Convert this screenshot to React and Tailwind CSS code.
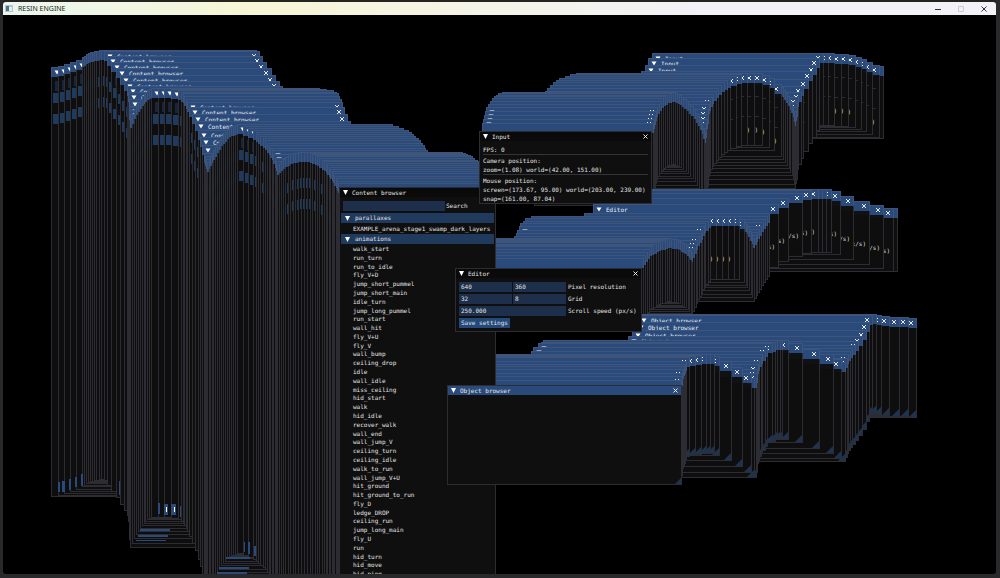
import React from "react";

const MONO = "font-['DejaVu_Sans_Mono','Liberation_Mono',monospace]";

// Paths that each window was dragged along: [x, y, steps from the previous point].
const CONTENT_PATH = [
  [51, 67, 1], [58, 66, 1], [64, 64, 1], [70, 62, 1], [76, 60, 1], [82, 57, 1], [88, 53, 3], [94, 51, 3], [101, 50, 3],
  [104, 51, 1], [107, 56, 1], [111, 62, 1], [116, 68, 1], [120, 75, 1], [124, 81, 1], [127, 86, 1], [128, 92, 1], [129, 99, 1], [129, 106, 1], [130, 118, 3],
  [136, 105, 3], [142, 96, 3], [147, 90, 3], [151, 88, 2], [158, 88, 1], [164, 88, 1], [171, 89, 1], [178, 90, 1], [183, 93, 2],
  [187, 102, 3], [189, 107, 1], [192, 114, 1], [195, 121, 1], [198, 130, 1], [200, 137, 1], [202, 145, 1], [204, 153, 1], [207, 162, 3],
  [213, 150, 4], [221, 136, 4], [229, 127, 4], [237, 124, 4], [243, 126, 1], [248, 128, 1], [253, 130, 1], [258, 134, 2],
  [265, 140, 3], [272, 150, 4], [277, 165, 4], [283, 159, 3], [290, 154, 3], [298, 152, 3], [307, 152, 3], [317, 156, 4], [326, 163, 4], [333, 173, 5], [338, 183, 4],
];
const INPUT_PATH = [
  [884, 66, 1], [880, 65, 1], [873, 62, 1], [867, 59, 1], [862, 57, 1], [856, 55, 1], [849, 54, 1], [842, 54, 1], [835, 53, 1], [829, 53, 1], [824, 53, 1],
  [820, 58, 1], [817, 65, 1], [813, 71, 1], [809, 79, 1], [804, 86, 1], [799, 97, 2], [796, 116, 4],
  [793, 103, 3], [788, 93, 3], [782, 84, 3], [775, 78, 1], [770, 75, 1], [763, 73, 1], [755, 73, 1], [748, 73, 1], [742, 74, 1], [737, 76, 1], [731, 78, 1],
  [725, 82, 2], [719, 88, 2], [714, 94, 2], [710, 104, 3], [706, 133, 6],
  [702, 120, 3], [696, 109, 3], [689, 101, 3], [682, 95, 3], [676, 92, 3], [670, 93, 3], [664, 98, 3], [658, 107, 3], [654, 123, 4],
];
const EDITOR_PATH = [
  [898, 208, 1], [894, 208, 1], [884, 205, 1], [870, 201, 1], [854, 196, 1], [841, 191, 1], [832, 189, 1], [827, 189, 1], [823, 189, 1], [819, 189, 1],
  [812, 190, 1], [803, 193, 1], [789, 198, 1], [779, 204, 1], [770, 213, 1], [766, 219, 2], [760, 229, 3], [755, 238, 3],
  [750, 227, 3], [745, 219, 3], [740, 216, 1], [735, 216, 1], [729, 216, 1], [723, 216, 1], [717, 216, 1], [711, 218, 1], [706, 223, 2], [700, 236, 4], [693, 252, 4],
  [687, 244, 4], [679, 239, 4], [670, 238, 4], [661, 241, 4], [652, 246, 4], [644, 258, 4],
];
const OBJECT_PATH = [
  [917, 318, 1], [909, 317, 1], [900, 317, 1], [890, 316, 1], [882, 315, 1], [877, 314, 1], [873, 315, 1], [870, 322, 1], [867, 330, 1], [863, 336, 1],
  [859, 341, 1], [853, 348, 2], [849, 354, 2], [846, 362, 2], [842, 359, 1], [834, 354, 1], [820, 349, 1], [803, 343, 1], [789, 340, 1], [783, 340, 1], [778, 340, 2],
  [773, 343, 2], [768, 347, 1], [763, 354, 2], [759, 364, 3], [757, 378, 3], [755, 378, 1], [752, 373, 1], [743, 367, 1], [732, 361, 1], [720, 356, 1], [715, 354, 1],
  [711, 354, 1], [707, 354, 1], [702, 355, 1], [696, 356, 1], [690, 357, 1], [687, 361, 1], [684, 369, 3], [682, 380, 3],
];

function expand(path) {
  const out = [];
  path.forEach(([x, y, n], i) => {
    const [px, py] = i ? path[i - 1] : [x, y];
    for (let k = 1; k <= n; k++) {
      out.push([Math.round(px + ((x - px) * k) / n), Math.round(py + ((y - py) * k) / n)]);
    }
  });
  return out;
}

// One stamped copy of a window. Only what the next copy leaves uncovered is drawn as text.
function Ghost({ x, y, w, h, dx, dy, title, tail, tailX, tailY, children }) {
  const tailChars = tail ? Math.ceil((-dx - (w - tailX) - 1) / 3.6) : 0;
  return (
    <g transform={`translate(${x} ${y})`}>
      <rect width={w} height={h} fill="#0f0f0f" fillOpacity="0.96" />
      <rect width={w} height="10" fill="#294a7a" />
      {children}
      <rect x="0.5" y="0.5" width={w - 1} height={h - 1} fill="none" stroke="#6e6e80" strokeOpacity="0.32" />
      {(dy >= 3 || dx >= 3) && <path d="M3.500 3.500h5l-2.500 4z" fill="#fff" />}
      {dy >= 5 && <text x="13" y="8" fontSize="6" fill="#e8edf5">{title}</text>}
      {(dy >= 3 || dx <= -3) && <path d={`M${w - 8} 3l4 4m0-4l-4 4`} stroke="#fff" strokeWidth="0.9" />}
      {tailChars > 0 && (
        <text x={tailX} y={tailY} textAnchor="end" fontSize="6" fill="#ddd">{tail.slice(-tailChars)}</text>
      )}
    </g>
  );
}

function Trail({ path, fromRight, children, ...ghost }) {
  const points = expand(path);
  return points.map(([x, y], i) => {
    const [nx, ny] = points[i + 1] ?? [x, y];
    return (
      <Ghost key={i} {...ghost} x={fromRight ? x - ghost.w : x} y={y} dx={nx - x} dy={ny - y}>
        {children}
      </Ghost>
    );
  });
}

function Trails() {
  return (
    <svg className={`absolute inset-0 h-full w-full ${MONO}`} aria-hidden="true">
      <g transform="translate(-3 -15)">
        <Trail path={CONTENT_PATH} w={156} h={430} title="Content browser">
          <rect x="4" y="14" width="102" height="10" fill="#18253b" />
          <rect x="2" y="26" width="152" height="10" fill="#1f3a5c" />
          <rect x="2" y="47" width="152" height="10" fill="#1f3a5c" />
        </Trail>
        <g fill="#2b4a78">
          <path d="M58 482h2v10h-2zM62 481h3v11h-3zM69 479h2v11h-2zM75 477h2v10h-2zM81 474h2v12h-2zM119 481h1v14h-1z" />
          <path d="M158 503h2v11h-2zM164 504h4v11h-4zM171 504h5v11h-5zM180 506h1v11h-1z" />
          <path d="M140 529h30v2h-30zM138 535h30v2h-30zM136 540h30v1h-30z" />
          <path d="M244 542h1v10h-1zM248 542h2v12h-2zM254 546h2v10h-2zM226 557h24v2h-24zM219 567h30v2h-30zM217 572h30v2h-30z" />
        </g>
        <path d="M166 507h1v5h-1zM174 507h1v5h-1z" fill="#fff" />
        <Trail path={INPUT_PATH} fromRight w={172} h={73} title="Input" tail=")" tailX={167} tailY={59}>
          <path d="M3 23.500h165M3 43.500h165" stroke="#6e6e80" strokeOpacity="0.3" />
        </Trail>
        <Trail path={EDITOR_PATH} fromRight w={186} h={64} title="Editor" tail="(px/s)" tailX={182} tailY={45} />
        <Trail path={OBJECT_PATH} fromRight w={235} h={100} title="Object browser">
          <path d="M234 92v7h-7z" fill="#1e3350" />
        </Trail>
      </g>
    </svg>
  );
}

function Panel({ title, place, active, closable = true, children }) {
  return (
    <section className={`absolute flex flex-col border border-[#2c2c32] bg-[#0f0f0f] ${place}`}>
      <header className={`flex h-[9px] shrink-0 items-center gap-1 px-[3px] ${active ? "bg-[#294a7a]" : "bg-[#0a0a0a]"}`}>
        <button aria-label={`Collapse ${title}`} className="flex">
          <svg width="5" height="5" viewBox="0 0 5 5"><path d="M0 0h5L2.500 5z" fill="#fff" /></svg>
        </button>
        <h2 className="flex-1 leading-[9px]">{title}</h2>
        {closable && (
          <button aria-label={`Close ${title}`} className="flex">
            <svg width="5" height="5" viewBox="0 0 5 5"><path d="M.5.5l4 4m0-4l-4 4" stroke="#fff" strokeWidth=".9" /></svg>
          </button>
        )}
      </header>
      {children}
    </section>
  );
}

function TreeHeader({ children }) {
  return (
    <button className="flex h-[10px] w-full shrink-0 items-center gap-[5px] bg-[#1f3a5c] pl-1 text-left">
      <svg width="5" height="5" viewBox="0 0 5 5"><path d="M0 0h5L2.500 5z" fill="#fff" /></svg>
      <span className="leading-[10px]">{children}</span>
    </button>
  );
}

const ANIMATIONS = [
  "walk_start", "run_turn", "run_to_idle", "fly_V+D", "jump_short_pummel", "jump_short_main", "idle_turn", "jump_long_pummel",
  "run_start", "wall_hit", "fly_V+U", "fly_V", "wall_bump", "ceiling_drop", "idle", "wall_idle", "miss_ceiling", "hid_start",
  "walk", "hid_idle", "recover_walk", "wall_end", "wall_jump_V", "ceiling_turn", "ceiling_idle", "walk_to_run", "wall_jump_V+U",
  "hit_ground", "hit_ground_to_run", "fly_D", "ledge_DROP", "ceiling_run", "jump_long_main", "fly_U", "run", "hid_turn",
  "hid_move", "hid_ping",
];

const FIELD = "h-[10px] min-w-0 bg-[#1d2f4b] px-[2px] leading-[10px] text-[#e4e4e4] outline-none";

export default function App() {
  return (
    <div className="flex h-screen flex-col overflow-hidden bg-[#29292b] pr-1 pb-1 pl-[3px] font-['Noto_Sans',sans-serif]">
      <div className="h-[2px] shrink-0 bg-[#25231f]" />
      <header className="flex h-[13px] shrink-0 items-center rounded-t-[3px] bg-linear-to-r from-[#eaf7ee] via-[#f7f6d6] via-25% to-[#f2f2f7] to-70% pr-[9px] pl-[2px] text-[#222]">
        <svg width="8" height="7" viewBox="0 0 8 7" aria-hidden="true">
          <path d="M0 0h8v7H0z" fill="#b4c6c8" /><path d="M1 1h3v5H1z" fill="#4b7488" /><path d="M4 2h3v4H4z" fill="#e8eeee" />
        </svg>
        <h1 className="ml-[5px] flex-1 text-[7px] leading-[13px]">RESIN ENGINE</h1>
        <div className="flex items-center gap-[17px]">
          <button aria-label="Minimize" className="flex"><svg width="6" height="6"><path d="M0 3.500h6" stroke="#333" /></svg></button>
          <button aria-label="Maximize" className="flex"><svg width="6" height="6"><path d="M.5.5h5v5h-5z" stroke="#ccc" fill="none" /></svg></button>
          <button aria-label="Close" className="flex"><svg width="6" height="6"><path d="M.5.5l5 5m0-5l-5 5" stroke="#333" /></svg></button>
        </div>
      </header>

      <main className={`relative flex-1 overflow-hidden rounded-b-[3px] bg-black text-[6px] text-[#e4e4e4] ${MONO}`}>
        <Trails />

        <Panel title="Content browser" closable={false} place="left-[336px] top-[172px] h-[430px] w-[157px]">
          <label className="mt-[4px] flex items-center gap-px pl-[3px]">
            <input type="text" className={`${FIELD} w-[102px]`} />
            <span className="leading-[10px]">Search</span>
          </label>
          <div className="mt-[2px] flex flex-col px-px">
            <TreeHeader>parallaxes</TreeHeader>
            <p className="pl-3 leading-[11px] whitespace-nowrap">EXAMPLE_arena_stage1_swamp_dark_layers</p>
            <TreeHeader>animations</TreeHeader>
            <ul className="grid h-[334px] auto-rows-fr pl-3">
              {ANIMATIONS.map((name) => (
                <li key={name} className="leading-[9px]">{name}</li>
              ))}
            </ul>
          </div>
        </Panel>

        <Panel title="Input" place="left-[476px] top-[116px] h-[73px] w-[173px]">
          <div className="flex flex-col px-[3px] pt-[4px] leading-[9px] whitespace-nowrap">
            <p>FPS: 0</p>
            <hr className="mb-px border-[#333338]" />
            <p>Camera position:</p>
            <p>zoom=(1.08) world=(42.00, 151.00)</p>
            <hr className="mb-px border-[#333338]" />
            <p>Mouse position:</p>
            <p>screen=(173.67, 95.00) world=(203.00, 239.00)</p>
            <p>snap=(161.00, 87.04)</p>
          </div>
        </Panel>

        <Panel title="Editor" place="left-[452px] top-[253px] h-[64px] w-[187px]">
          <form className="flex flex-col items-start gap-[2px] pt-[4px] pl-[3px] leading-[10px] whitespace-nowrap">
            <div className="flex gap-px">
              <input aria-label="Pixel resolution width" defaultValue="640" className={`${FIELD} w-[53px]`} />
              <input id="res" defaultValue="360" className={`${FIELD} w-[53px]`} />
              <label htmlFor="res" className="pl-px">Pixel resolution</label>
            </div>
            <div className="flex gap-px">
              <input aria-label="Grid width" defaultValue="32" className={`${FIELD} w-[53px]`} />
              <input id="grid" defaultValue="8" className={`${FIELD} w-[53px]`} />
              <label htmlFor="grid" className="pl-px">Grid</label>
            </div>
            <div className="flex gap-px">
              <input id="speed" defaultValue="250.000" className={`${FIELD} w-[107px]`} />
              <label htmlFor="speed" className="pl-px">Scroll speed (px/s)</label>
            </div>
            <button type="button" className="h-[10px] bg-[#23497a] px-[2px] leading-[10px]">Save settings</button>
          </form>
        </Panel>

        <Panel title="Object browser" active place="left-[444px] top-[370px] h-[100px] w-[235px]">
          <svg width="6" height="6" className="mt-auto ml-auto" aria-hidden="true"><path d="M6 0v6H0z" fill="#1e3350" /></svg>
        </Panel>
      </main>
    </div>
  );
}
